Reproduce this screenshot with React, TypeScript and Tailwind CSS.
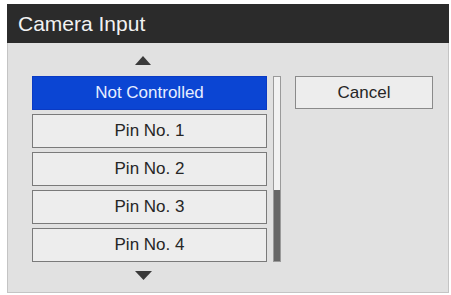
export default function App() {
    const items = ['Not Controlled', 'Pin No. 1', 'Pin No. 2', 'Pin No. 3', 'Pin No. 4']

    return (
        <div className="h-[295px] w-[451px] bg-white pl-[7px] pt-[4px] font-['Liberation_Sans',Arial,sans-serif]">
            <div className="flex h-[289px] w-[442px] flex-col">
                {/* Title bar */}
                <div className="flex h-[39px] items-center bg-[#2b2b2b] pl-[11px] text-[21px] text-[#f2f2f2]">
                    Camera Input
                </div>

                {/* Body */}
                <div className="flex flex-1 border-x border-b border-[#c4c4c4] bg-[#e1e1e1] pl-[24px]">
                    <div className="flex w-[235px] flex-col">
                        <div className="flex h-[33px] items-center pl-[103px] pt-[2px]">
                            <svg width="16" height="9" viewBox="0 0 16 9">
                                <polygon points="8,0 16,9 0,9" fill="#3a3a3a" />
                            </svg>
                        </div>
                        <div className="flex flex-col gap-[4px]">
                            {items.map((label, i) => (
                                <div
                                    key={label}
                                    className={
                                        i === 0
                                            ? 'flex h-[34px] items-center justify-center border border-[#0a3ac4] bg-[#0b45d3] text-[17px] text-[#e6eeff]'
                                            : 'flex h-[34px] items-center justify-center border border-[#7a7a7a] bg-[#ededed] text-[17px] text-[#262626]'
                                    }
                                >
                                    {label}
                                </div>
                            ))}
                        </div>
                        <div className="flex h-[28px] items-center pb-[2px] pl-[103px]">
                            <svg width="17" height="9" viewBox="0 0 17 9">
                                <polygon points="0,0 17,0 8.5,9" fill="#3a3a3a" />
                            </svg>
                        </div>
                    </div>

                    {/* Scrollbar */}
                    <div className="ml-[6px] mt-[33px] flex h-[186px] w-[8px] flex-col justify-end border border-[#9a9a9a] bg-[#f2f2f2]">
                        <div className="h-[71px] bg-[#666666]" />
                    </div>

                    {/* Cancel */}
                    <div className="ml-[14px] mt-[33px] flex h-[33px] w-[138px] items-center justify-center border border-[#8a8a8a] bg-[#ededed] text-[17px] text-[#262626]">
                        Cancel
                    </div>
                </div>
            </div>
        </div>
    )
}
